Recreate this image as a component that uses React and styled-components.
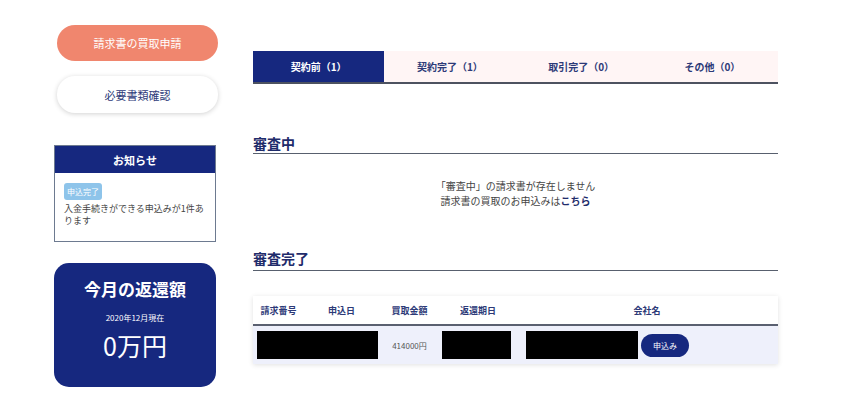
import React from "react";
import styled, { createGlobalStyle, css } from "styled-components";

const GlobalStyle = createGlobalStyle`
  body {
    margin: 0;
    background: #fff;
    font-family: "Noto Sans CJK JP", "Noto Sans", sans-serif;
    color: #333;
  }
`;

const NAVY = "#16287f";

const Page = styled.div`
  display: flex;
  align-items: flex-start;
  padding-left: 54px;
  width: 850px;
  height: 418px;
  box-sizing: border-box;
`;

const Sidebar = styled.aside`
  width: 162px;
  padding-top: 25px;
  display: flex;
  flex-direction: column;
`;

const PillButton = styled.div`
  width: 161px;
  margin-left: 3px;
  height: 36px;
  border-radius: 18px;
  display: flex;
  align-items: center;
  justify-content: center;
  font-size: 11px;
  box-sizing: border-box;
  ${(p) =>
    p.primary
      ? css`
          background: #f0866e;
          color: #fff;
        `
      : css`
          margin-top: 15px;
          height: 37px;
          background: #fff;
          color: #2d3a78;
          box-shadow: 0 1px 5px rgba(0, 0, 0, 0.18);
        `}
`;

const Notice = styled.div`
  margin-top: 32px;
  height: 97px;
  border: 1px solid #6d7a90;
  box-sizing: border-box;
`;

const NoticeHead = styled.div`
  height: 27px;
  background: ${NAVY};
  color: #fff;
  font-size: 11px;
  font-weight: bold;
  display: flex;
  align-items: center;
  justify-content: center;
`;

const NoticeBody = styled.div`
  padding: 10px 9px 0;
`;

const Badge = styled.div`
  width: fit-content;
  background: #8ec4ea;
  color: #fff;
  font-size: 8px;
  line-height: 17px;
  padding: 0 3px;
  border-radius: 3px;
`;

const NoticeText = styled.p`
  margin: 3px 0 0;
  font-size: 9px;
  line-height: 12px;
  color: #444;
`;

const Card = styled.div`
  margin-top: 21px;
  height: 124px;
  border-radius: 15px;
  background: ${NAVY};
  color: #fff;
  display: flex;
  flex-direction: column;
  align-items: center;
  padding-top: 14px;
  box-sizing: border-box;
`;

const CardTitle = styled.div`
  font-size: 17px;
  font-weight: bold;
  line-height: 24px;
`;

const CardDate = styled.div`
  margin-top: 11px;
  font-size: 8px;
  line-height: 12px;
`;

const CardAmount = styled.div`
  margin-top: 4px;
  font-size: 25px;
  line-height: 34px;
`;

const Main = styled.main`
  margin-left: 37px;
  width: 525px;
  padding-top: 51px;
`;

const Tabs = styled.div`
  display: flex;
  height: 31px;
  border-bottom: 2px solid #4d5260;
  background: #fff5f5;
`;

const Tab = styled.div`
  flex: 1;
  display: flex;
  align-items: center;
  justify-content: center;
  font-size: 10px;
  font-weight: bold;
  color: #2d3a78;
  ${(p) =>
    p.active &&
    css`
      background: ${NAVY};
      color: #fff;
    `}
`;

const Heading = styled.h2`
  margin: ${(p) => p.top}px 0 0;
  font-size: 14px;
  line-height: 20px;
  font-weight: bold;
  color: #1f2c6b;
  padding-bottom: ${(p) => p.pad ?? 0}px;
  border-bottom: 1px solid #58606e;
`;

const Empty = styled.div`
  margin-top: 24px;
  text-align: center;
  font-size: 10px;
  line-height: 15px;
  color: #444;
`;

const Link = styled.span`
  font-weight: bold;
  color: #1f2c6b;
`;

const Table = styled.table`
  margin-top: 25px;
  width: 525px;
  border-collapse: collapse;
  table-layout: fixed;
  box-shadow: 0 1px 5px rgba(0, 0, 0, 0.12);
`;

const Th = styled.th`
  height: 28px;
  padding: 0;
  background: #fff;
  font-size: 9px;
  font-weight: bold;
  color: #2d3a78;
  border-bottom: 2px solid #5a6070;
`;

const Td = styled.td`
  height: 38px;
  padding: 0 ${(p) => p.right ?? 4}px 0 ${(p) => p.left ?? 4}px;
  background: #eef0fb;
  font-size: 8px;
  color: #555;
  text-align: center;
`;

const Cell = styled.div`
  display: flex;
  align-items: center;
  gap: 3px;
`;

const Redacted = styled.div`
  height: 28px;
  width: ${(p) => p.w}px;
  background: #000;
`;

const ApplyButton = styled.div`
  width: 48px;
  height: 23px;
  border-radius: 12px;
  background: ${NAVY};
  color: #fff;
  font-size: 8px;
  display: flex;
  align-items: center;
  justify-content: center;
`;

export default function App() {
  return (
    <>
      <GlobalStyle />
      <Page>
        <Sidebar>
          <PillButton primary>請求書の買取申請</PillButton>
          <PillButton>必要書類確認</PillButton>
          <Notice>
            <NoticeHead>お知らせ</NoticeHead>
            <NoticeBody>
              <Badge>申込完了</Badge>
              <NoticeText>入金手続きができる申込みが1件あります</NoticeText>
            </NoticeBody>
          </Notice>
          <Card>
            <CardTitle>今月の返還額</CardTitle>
            <CardDate>2020年12月現在</CardDate>
            <CardAmount>0万円</CardAmount>
          </Card>
        </Sidebar>
        <Main>
          <Tabs>
            <Tab active>契約前（1）</Tab>
            <Tab>契約完了（1）</Tab>
            <Tab>取引完了（0）</Tab>
            <Tab>その他（0）</Tab>
          </Tabs>
          <Heading top={49}>審査中</Heading>
          <Empty>
            「審査中」の請求書が存在しません
            <br />
            請求書の買取のお申込みは<Link>こちら</Link>
          </Empty>
          <Heading top={40} pad={2}>
            審査完了
          </Heading>
          <Table>
            <colgroup>
              <col style={{ width: 51 }} />
              <col style={{ width: 75 }} />
              <col style={{ width: 61 }} />
              <col style={{ width: 76 }} />
              <col />
            </colgroup>
            <thead>
              <tr>
                <Th>請求番号</Th>
                <Th>申込日</Th>
                <Th>買取金額</Th>
                <Th>返還期日</Th>
                <Th>会社名</Th>
              </tr>
            </thead>
            <tbody>
              <tr>
                <Td colSpan={2}>
                  <Redacted w={121} />
                </Td>
                <Td>414000円</Td>
                <Td left={2}>
                  <Redacted w={69} />
                </Td>
                <Td left={10}>
                  <Cell>
                    <Redacted w={112} />
                    <ApplyButton>申込み</ApplyButton>
                  </Cell>
                </Td>
              </tr>
            </tbody>
          </Table>
        </Main>
      </Page>
    </>
  );
}
